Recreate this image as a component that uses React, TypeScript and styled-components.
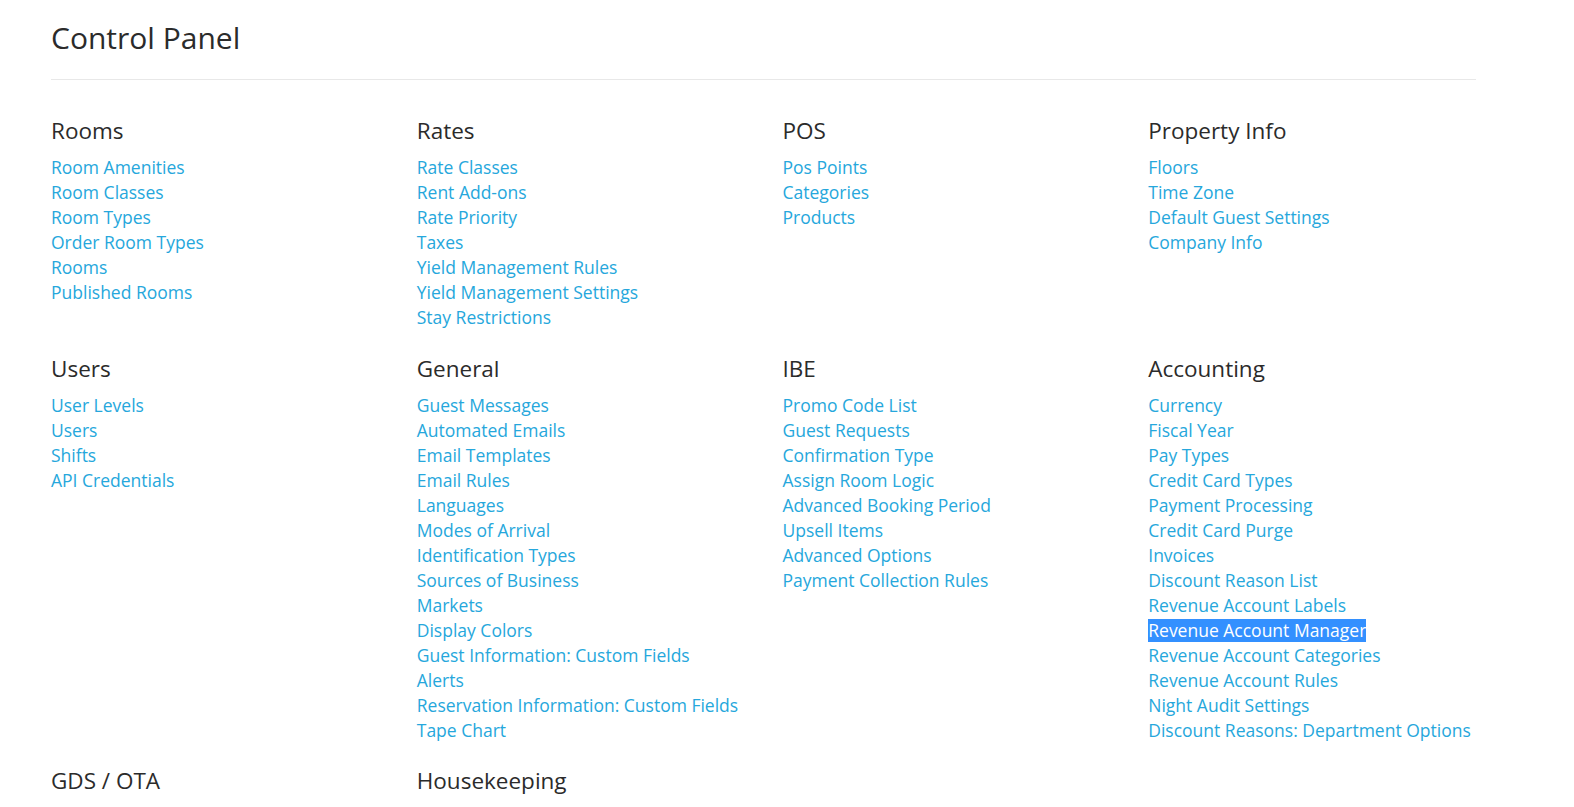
import React from "react";
import styled, { createGlobalStyle } from "styled-components";

const Global = createGlobalStyle`
  html, body { margin: 0; padding: 0; background: #fff; }
  body { font-family: "Open Sans", "Noto Sans", Arial, sans-serif; color: #333; }
  ::selection { background: #3390ff; color: #fff; }
`;

const Page = styled.div`
  padding: 18px 0 0 51px;
`;

const Title = styled.h1`
  margin: 0;
  font-size: 30px;
  line-height: 40px;
  font-weight: 400;
  color: #2b2b2b;
`;

const Rule = styled.hr`
  width: 1425px;
  margin: 21px 0 0;
  border: 0;
  border-top: 1px solid #e8e8e8;
  height: 0;
`;

const Grid = styled.div`
  display: grid;
  grid-template-columns: repeat(4, 1fr);
  width: 1463px;
  row-gap: 23.5px;
  margin-top: 36px;
`;

const Section = styled.section`
  display: flex;
  flex-direction: column;
  align-items: flex-start;
`;

const Heading = styled.h3`
  margin: 0 0 9px;
  font-size: 22.5px;
  line-height: 30px;
  font-weight: 400;
  color: #2b2b2b;
`;

const Link = styled.a<{ $selected?: boolean }>`
  font-size: 17.5px;
  line-height: 25px;
  color: ${(p) => (p.$selected ? "#fff" : "#26a7dc")};
  text-decoration: none;
  white-space: nowrap;
  cursor: pointer;
  ${(p) =>
    p.$selected
      ? `background: #3390ff; line-height: 23px; margin: 1px 0;`
      : ""}
`;

const sections: { title: string; links: string[] }[] = [
  { title: "Rooms", links: ["Room Amenities", "Room Classes", "Room Types", "Order Room Types", "Rooms", "Published Rooms"] },
  { title: "Rates", links: ["Rate Classes", "Rent Add-ons", "Rate Priority", "Taxes", "Yield Management Rules", "Yield Management Settings", "Stay Restrictions"] },
  { title: "POS", links: ["Pos Points", "Categories", "Products"] },
  { title: "Property Info", links: ["Floors", "Time Zone", "Default Guest Settings", "Company Info"] },
  { title: "Users", links: ["User Levels", "Users", "Shifts", "API Credentials"] },
  {
    title: "General",
    links: [
      "Guest Messages", "Automated Emails", "Email Templates", "Email Rules", "Languages", "Modes of Arrival",
      "Identification Types", "Sources of Business", "Markets", "Display Colors", "Guest Information: Custom Fields",
      "Alerts", "Reservation Information: Custom Fields", "Tape Chart",
    ],
  },
  {
    title: "IBE",
    links: ["Promo Code List", "Guest Requests", "Confirmation Type", "Assign Room Logic", "Advanced Booking Period", "Upsell Items", "Advanced Options", "Payment Collection Rules"],
  },
  {
    title: "Accounting",
    links: [
      "Currency", "Fiscal Year", "Pay Types", "Credit Card Types", "Payment Processing", "Credit Card Purge", "Invoices",
      "Discount Reason List", "Revenue Account Labels", "Revenue Account Manager", "Revenue Account Categories",
      "Revenue Account Rules", "Night Audit Settings", "Discount Reasons: Department Options",
    ],
  },
  { title: "GDS / OTA", links: [] },
  { title: "Housekeeping", links: [] },
];

export default function App() {
  return (
    <Page>
      <Global />
      <Title>Control Panel</Title>
      <Rule />
      <Grid>
        {sections.map((s) => (
          <Section key={s.title}>
            <Heading>{s.title}</Heading>
            {s.links.map((l) => (
              <Link key={l} $selected={l === "Revenue Account Manager"}>
                {l}
              </Link>
            ))}
          </Section>
        ))}
      </Grid>
    </Page>
  );
}
